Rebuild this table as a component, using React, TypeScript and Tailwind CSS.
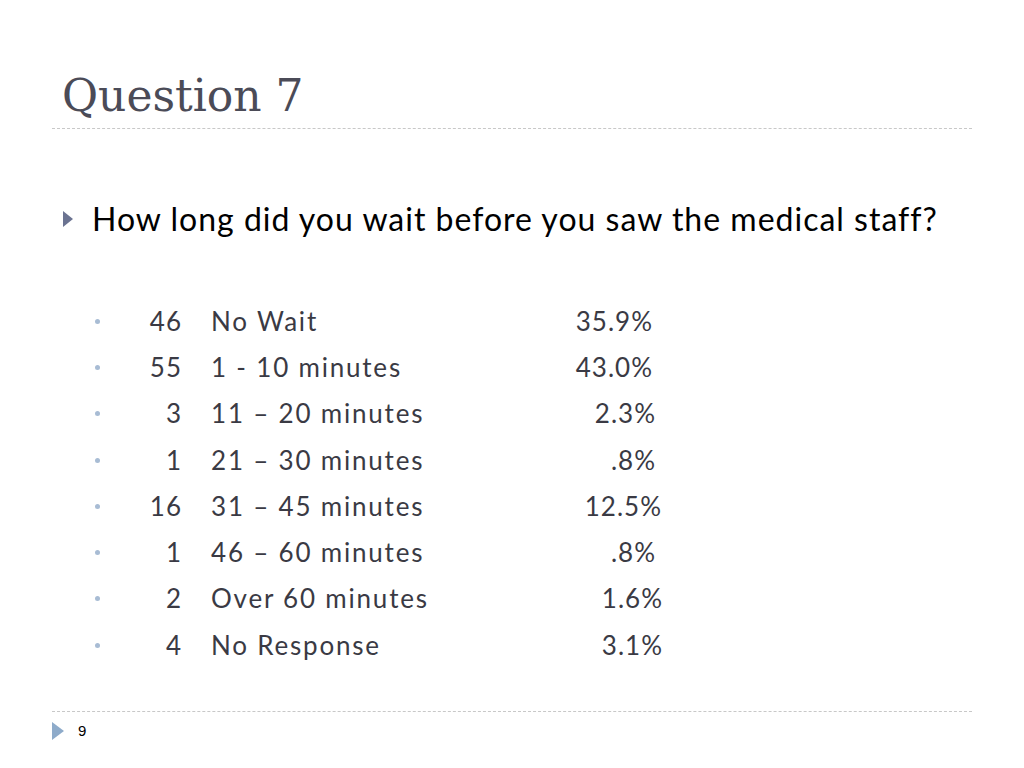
const rows = [
  { n: "46", label: "No Wait", pct: "35.9%", pr: "pr-[10px]" },
  { n: "55", label: "1 - 10 minutes", pct: "43.0%", pr: "pr-[10px]" },
  { n: "3", label: "11 – 20 minutes", pct: "2.3%", pr: "pr-[7px]" },
  { n: "1", label: "21 – 30 minutes", pct: ".8%", pr: "pr-[7px]" },
  { n: "16", label: "31 – 45 minutes", pct: "12.5%", pr: "pr-[1px]" },
  { n: "1", label: "46 – 60 minutes", pct: ".8%", pr: "pr-[7px]" },
  { n: "2", label: "Over 60 minutes", pct: "1.6%", pr: "pr-0" },
  { n: "4", label: "No Response", pct: "3.1%", pr: "pr-0" },
];

const App = () => {
  return (
    <div className="w-[1024px] h-[768px] bg-white flex flex-col font-['Lato',sans-serif] text-[#3a3a44]">
      {/* title */}
      <div className="mx-[52px] pt-[70px] pb-[6px] border-b border-dashed border-[#c8c8c8]">
        <h1 className="pl-[10px] text-[44px] leading-[52px] text-[#4b4b57] font-['DejaVu_Serif',serif]">
          Question 7
        </h1>
      </div>

      {/* question */}
      <div className="flex items-center pl-[63px] mt-[68px] h-[44px]">
        <svg width="10" height="16" viewBox="0 0 10 16" className="mr-[19px]">
          <path d="M0 0 L10 8 L0 16 Z" fill="#6b7391" />
        </svg>
        <p className="text-[32px] tracking-[1px] text-black">How long did you wait before you saw the medical staff?</p>
      </div>

      {/* answers */}
      <div className="flex flex-col mt-[57px]">
        {rows.map((r, i) => (
          <div key={i} className="flex items-center h-[46.3px] pl-[95px] text-[26px]">
            <span className="w-[5px] h-[5px] rounded-full bg-[#a8bcd4]" />
            <span className="w-[82px] text-right tracking-[1px]">{r.n}</span>
            <span className="w-[370px] pl-[29px] tracking-[1.8px]">{r.label}</span>
            <span className={`w-[111px] text-right tracking-[1px] ${r.pr}`}>{r.pct}</span>
          </div>
        ))}
      </div>

      {/* footer */}
      <div className="mt-auto mb-[20px] mx-[52px] border-t border-dashed border-[#c8c8c8] flex items-center pt-[2px] h-[37px]">
        <svg width="12" height="18" viewBox="0 0 12 18">
          <path d="M0 0 L12 9 L0 18 Z" fill="#8eabca" />
        </svg>
        <span className="ml-[14px] text-[15px] text-black font-['Liberation_Sans',sans-serif]">9</span>
      </div>
    </div>
  );
};

export default App;
